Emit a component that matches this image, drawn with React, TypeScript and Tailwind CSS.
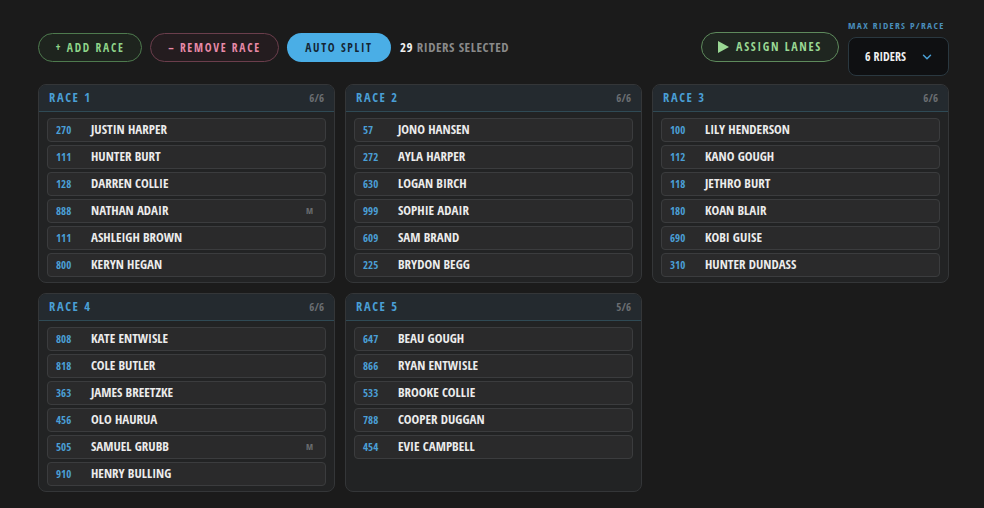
import { ChevronDown } from 'lucide-react'

type Rider = { num: string; name: string; m?: boolean }

const races: { title: string; count: string; riders: Rider[] }[] = [
  {
    title: 'RACE 1',
    count: '6/6',
    riders: [
      { num: '270', name: 'JUSTIN HARPER' },
      { num: '111', name: 'HUNTER BURT' },
      { num: '128', name: 'DARREN COLLIE' },
      { num: '888', name: 'NATHAN ADAIR', m: true },
      { num: '111', name: 'ASHLEIGH BROWN' },
      { num: '800', name: 'KERYN HEGAN' },
    ],
  },
  {
    title: 'RACE 2',
    count: '6/6',
    riders: [
      { num: '57', name: 'JONO HANSEN' },
      { num: '272', name: 'AYLA HARPER' },
      { num: '630', name: 'LOGAN BIRCH' },
      { num: '999', name: 'SOPHIE ADAIR' },
      { num: '609', name: 'SAM BRAND' },
      { num: '225', name: 'BRYDON BEGG' },
    ],
  },
  {
    title: 'RACE 3',
    count: '6/6',
    riders: [
      { num: '100', name: 'LILY HENDERSON' },
      { num: '112', name: 'KANO GOUGH' },
      { num: '118', name: 'JETHRO BURT' },
      { num: '180', name: 'KOAN BLAIR' },
      { num: '690', name: 'KOBI GUISE' },
      { num: '310', name: 'HUNTER DUNDASS' },
    ],
  },
  {
    title: 'RACE 4',
    count: '6/6',
    riders: [
      { num: '808', name: 'KATE ENTWISLE' },
      { num: '818', name: 'COLE BUTLER' },
      { num: '363', name: 'JAMES BREETZKE' },
      { num: '456', name: 'OLO HAURUA' },
      { num: '505', name: 'SAMUEL GRUBB', m: true },
      { num: '910', name: 'HENRY BULLING' },
    ],
  },
  {
    title: 'RACE 5',
    count: '5/6',
    riders: [
      { num: '647', name: 'BEAU GOUGH' },
      { num: '866', name: 'RYAN ENTWISLE' },
      { num: '533', name: 'BROOKE COLLIE' },
      { num: '788', name: 'COOPER DUGGAN' },
      { num: '454', name: 'EVIE CAMPBELL' },
    ],
  },
]

function RaceCard({ title, count, riders }: { title: string; count: string; riders: Rider[] }) {
  return (
    <div className="h-[199px] rounded-lg border border-[#343638] bg-[#222324] overflow-hidden">
      <div className="h-[27px] flex items-center justify-between pl-[10px] pr-[10px] bg-[#242a2f] border-b border-[#2f4a55]">
        <span className="text-[12.5px] font-bold tracking-[0.13em] text-[#4a9fd6]">{title}</span>
        <span className="text-[11px] font-bold text-[#6b6e72]">{count}</span>
      </div>
      <div className="flex flex-col gap-[3px] px-[8px] pt-[6px]">
        {riders.map((r, i) => (
          <div
            key={i}
            className="h-[24px] flex items-center rounded-[4px] border border-[#3b3c3e] bg-[#2a2a2b] pl-[8px] pr-[12px]"
          >
            <span className="w-[35px] text-[11px] font-bold text-[#4a9fd6]">{r.num}</span>
            <span className="flex-1 text-[13px] font-bold text-[#ececec]">{r.name}</span>
            {r.m && <span className="text-[9px] font-bold text-[#6b6d70]">M</span>}
          </div>
        ))}
      </div>
    </div>
  )
}

export default function App() {
  return (
    <div className="w-[984px] h-[508px] bg-[#1b1b1b] pl-[38px] pr-[35px] pt-[19px] [font-family:'Open_Sans_Condensed','Open_Sans',sans-serif] font-stretch-condensed">
      <div className="h-[57px] flex items-start justify-between">
        <div className="flex items-center gap-[8px] mt-[14px]">
          <button className="h-[29px] w-[104px] rounded-full border border-[#4e7a4e] bg-[#1e241e] text-[11.5px] font-bold tracking-[0.15em] text-[#8fd48a]">
            + ADD RACE
          </button>
          <button className="h-[29px] w-[129px] rounded-full border border-[#6b3e4c] bg-[#241c1f] text-[11.5px] font-bold tracking-[0.15em] text-[#e88aa8]">
            – REMOVE RACE
          </button>
          <button className="h-[29px] w-[104px] rounded-full bg-[#4aaee6] text-[11.5px] font-bold tracking-[0.15em] text-[#142433]">
            AUTO SPLIT
          </button>
          <span className="ml-[1px] text-[13px] font-bold tracking-[0.04em] text-[#f0f0f0]">
            29 <span className="font-semibold text-[#8a8a8a]">RIDERS SELECTED</span>
          </span>
        </div>
        <div className="flex items-start gap-[9px]">
          <button className="mt-[13px] h-[30px] w-[138px] flex items-center justify-center gap-[7px] rounded-full border border-[#5e8a5c] bg-[#1f2620] text-[12px] font-bold tracking-[0.14em] text-[#9ad894]">
            <svg width="11" height="12" viewBox="0 0 11 12">
              <path d="M0 0 L11 6 L0 12 Z" fill="#9ad894" />
            </svg>
            ASSIGN LANES
          </button>
          <div className="w-[101px] flex flex-col items-start">
            <span className="text-[9.5px] font-bold tracking-[0.14em] text-[#4a8fbc] leading-[13px] whitespace-nowrap">
              MAX RIDERS P/RACE
            </span>
            <div className="mt-[5px] h-[39px] w-[101px] flex items-center justify-between rounded-lg border border-[#2a3840] bg-[#0f1012] pl-[16px] pr-[14px]">
              <span className="text-[12px] font-bold text-[#f0f0f0]">6 RIDERS</span>
              <ChevronDown size={14} strokeWidth={2.5} color="#4aa0d6" />
            </div>
          </div>
        </div>
      </div>
      <div className="mt-[8px] grid grid-cols-3 gap-x-[10px] gap-y-[10px]">
        {races.map((r) => (
          <RaceCard key={r.title} {...r} />
        ))}
      </div>
    </div>
  )
}
